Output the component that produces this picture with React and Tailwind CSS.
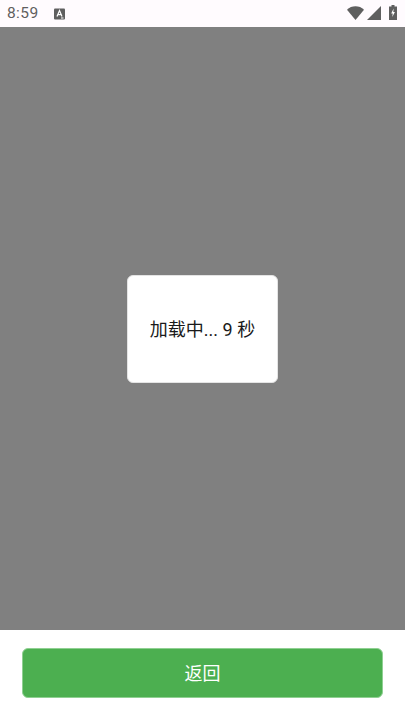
import React from 'react';

const cjk = { fontFamily: 'Roboto, "Noto Sans CJK SC", sans-serif' };

const StatusBar = () => (
    <div className="h-[27px] shrink-0 bg-[#fffbfe] flex items-center pl-[7px] pr-[8px]">
        <span className="text-[15.5px] leading-none text-[#5f5f5f] font-['Roboto',sans-serif] tracking-[0.4px]">8:59</span>
        <svg className="ml-[15px]" width="11" height="12" viewBox="0 0 11 12">
            <rect x="0" y="0.5" width="11" height="11" rx="1" fill="#5f5f5f" />
            <path d="M3 8.5 L5.5 2.5 L8 8.5 M4 6.6 H7" stroke="#fff" strokeWidth="1.2" fill="none" />
            <rect x="7" y="9.5" width="2.5" height="1" fill="#fff" />
        </svg>
        <div className="ml-auto flex items-end mb-[2px]">
            <svg width="17" height="14" viewBox="0 0 17 14">
                <path d="M0 3.8 C4.6 -0.8 12.4 -0.8 17 3.8 L8.5 14 Z" fill="#5f5f5f" />
            </svg>
            <svg className="ml-[3px]" width="14" height="14" viewBox="0 0 14 14">
                <path d="M14 0 V14 H0 Z" fill="#5f5f5f" />
            </svg>
            <svg className="ml-[8px]" width="8" height="15" viewBox="0 0 8 15">
                <path d="M2.5 0 H5.5 V1.5 H8 V15 H0 V1.5 H2.5 Z" fill="#5f5f5f" />
                <path d="M4.6 3.5 L2.2 8.4 H3.7 L3.3 12 L5.9 6.9 H4.3 Z" fill="#fff" />
            </svg>
        </div>
    </div>
);

const App = () => {
    return (
        <div className="w-[405px] h-[720px] flex flex-col bg-white overflow-hidden" style={cjk}>
            <StatusBar />
            <div className="flex-1 bg-[#808080] flex items-center justify-center">
                <div className="w-[151px] h-[108px] bg-white rounded-[6px] border border-[#e4e4e4] flex items-center justify-center">
                    <span className="text-[18px] text-[#1a1a1a] whitespace-nowrap pt-[1px]">加载中... 9 秒</span>
                </div>
            </div>
            <div className="h-[90px] shrink-0 bg-white pt-[18px] px-[22px]">
                <button className="w-[361px] h-[50px] bg-[#4caf50] border border-[#8fd092] rounded-[6px] text-white text-[18px] flex items-center justify-center">
                    <span className="pt-[1px]">返回</span>
                </button>
            </div>
        </div>
    );
};

export default App;
